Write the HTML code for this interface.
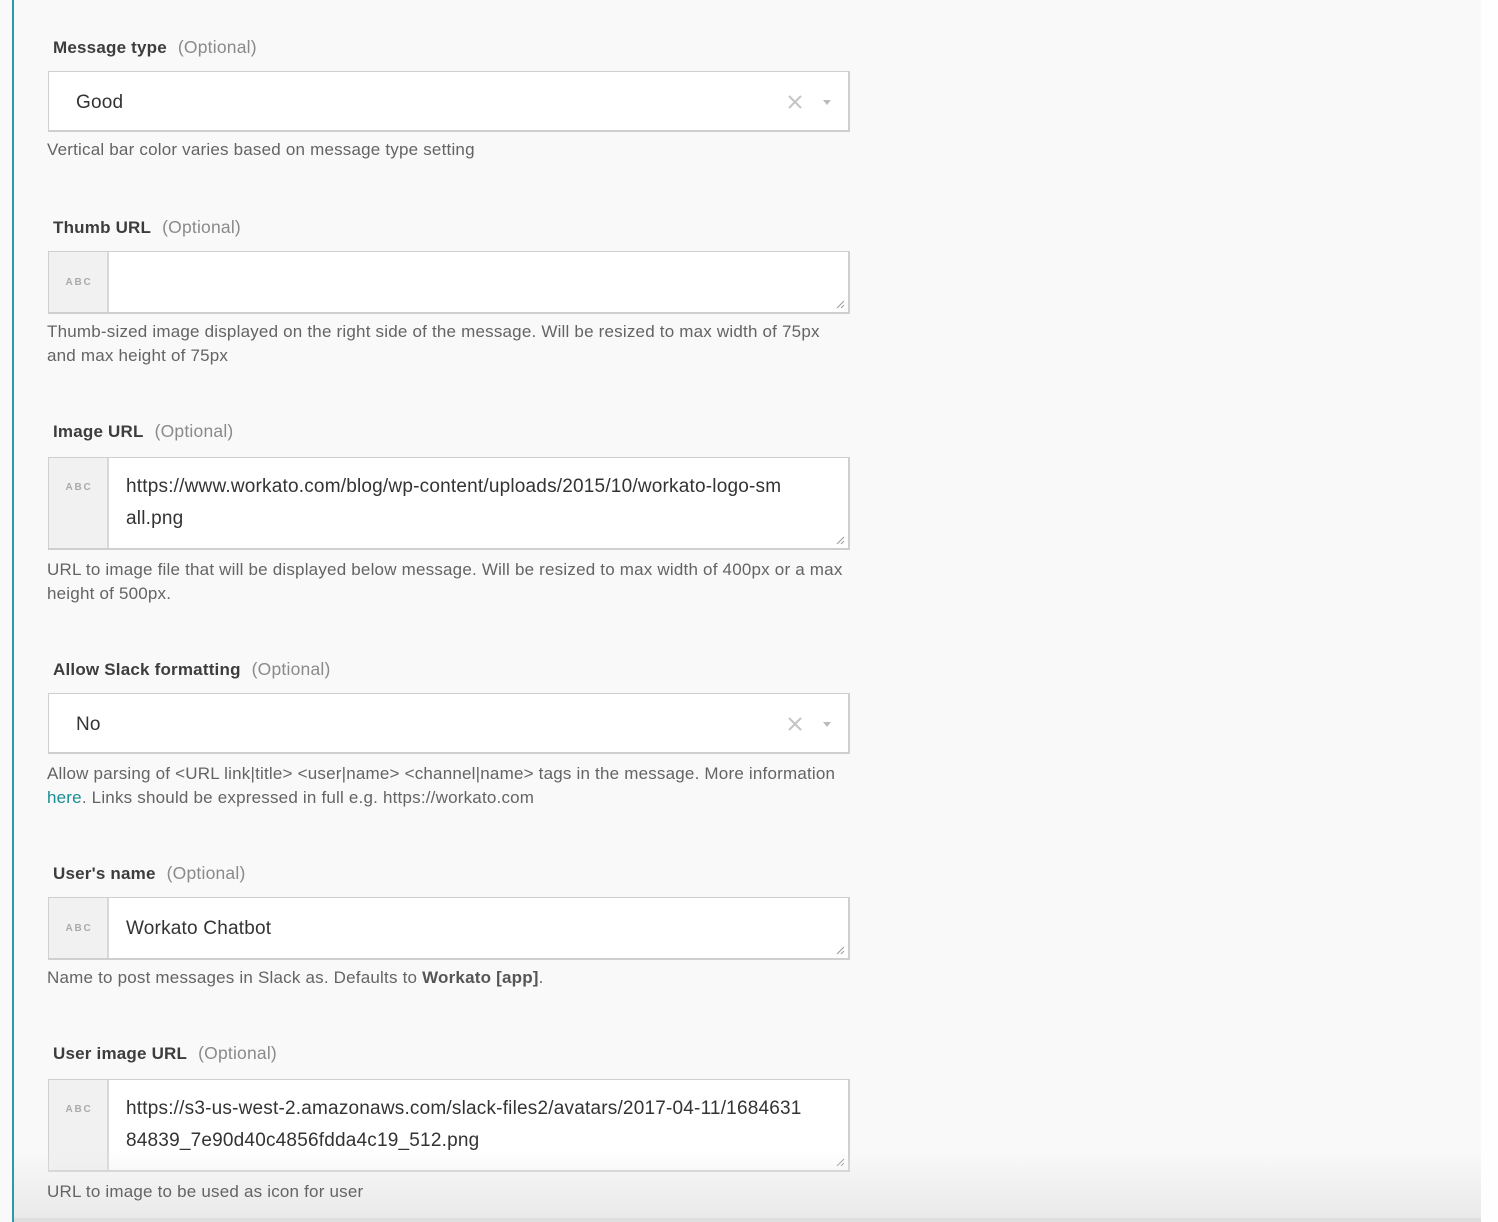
<!DOCTYPE html>
<html><head><meta charset="utf-8"><style>
html,body{margin:0;padding:0}
body{width:1498px;height:1222px;position:relative;overflow:hidden;background:#f9f9f9;font-family:"Liberation Sans",sans-serif;}
.rs{position:absolute;left:1481px;top:0;width:17px;height:1222px;background:#fefefe}
.lb{position:absolute;left:12px;top:0;width:2px;height:1222px;background:#2a9aa6}
.fade{position:absolute;left:14px;top:1150px;width:1467px;height:68px;background:linear-gradient(#f9f9f900,#e9e9e9)}
.bl{position:absolute;left:14px;top:1218px;width:1467px;height:4px;background:#dedede}
.lab{position:absolute;left:53px;font-size:17px;font-weight:bold;color:#3d3d3d;letter-spacing:0.2px;line-height:20px;white-space:nowrap}
.lab span{font-weight:normal;color:#8a8a8a;margin-left:11px;letter-spacing:0.2px;font-size:17.5px}
.box{position:absolute;left:48px;width:802px;background:#fff;border:1px solid #cfcfcf;border-bottom-width:2px;border-right-width:2px;box-sizing:border-box}
.val{position:absolute;left:27px;font-size:19px;color:#333;line-height:32px;white-space:nowrap;letter-spacing:0.2px}
.abc{position:absolute;left:0;top:0;bottom:0;width:58px;background:#f1f1f1;border-right:2px solid #d8d8d8}
.abc i{position:absolute;left:0;width:60px;text-align:center;font-style:normal;font-size:10px;font-weight:bold;letter-spacing:1.8px;color:#aaa}
.tv{left:77px}
.help{position:absolute;left:47px;font-size:17px;color:#646464;line-height:24px;white-space:nowrap;letter-spacing:0.2px}
.help a{color:#1a8c96;text-decoration:none}
.x{position:absolute;right:46px;top:23px}
.tri{position:absolute;right:17px;top:28px;width:0;height:0;border-left:4px solid transparent;border-right:4px solid transparent;border-top:5px solid #bbb}
.rz{position:absolute;right:3px;bottom:3px}
</style></head><body>
<div class="rs"></div>
<div class="lb"></div>

<div class="lab" style="top:37px">Message type<span>(Optional)</span></div>
<div class="box" style="top:71px;height:61px">
<div class="val" style="top:15px">Good</div>
<svg class="x" width="14" height="14"><path d="M1 1L13 13M13 1L1 13" stroke="#c4c4c4" stroke-width="2"/></svg>
<div class="tri"></div>
</div>
<div class="help" style="top:138px">Vertical bar color varies based on message type setting</div>

<div class="lab" style="top:217px">Thumb URL<span>(Optional)</span></div>
<div class="box" style="top:251px;height:63px">
<div class="abc"><i style="top:25px">ABC</i></div>
<svg class="rz" width="10" height="10"><path d="M9 2L2 9M9 6L6 9" stroke="#999" stroke-width="1"/></svg>
</div>
<div class="help" style="top:320px">Thumb-sized image displayed on the right side of the message. Will be resized to max width of 75px<br>and max height of 75px</div>

<div class="lab" style="top:421px">Image URL<span>(Optional)</span></div>
<div class="box" style="top:457px;height:93px">
<div class="abc"><i style="top:24px">ABC</i></div>
<div class="val tv" style="top:13px">https://www.workato.com/blog/wp-content/uploads/2015/10/workato-logo-sm<br>all.png</div>
<svg class="rz" width="10" height="10"><path d="M9 2L2 9M9 6L6 9" stroke="#999" stroke-width="1"/></svg>
</div>
<div class="help" style="top:558px">URL to image file that will be displayed below message. Will be resized to max width of 400px or a max<br>height of 500px.</div>

<div class="lab" style="top:659px">Allow Slack formatting<span>(Optional)</span></div>
<div class="box" style="top:693px;height:61px">
<div class="val" style="top:15px">No</div>
<svg class="x" width="14" height="14"><path d="M1 1L13 13M13 1L1 13" stroke="#c4c4c4" stroke-width="2"/></svg>
<div class="tri"></div>
</div>
<div class="help" style="top:762px">Allow parsing of &lt;URL link|title&gt; &lt;user|name&gt; &lt;channel|name&gt; tags in the message. More information<br><a>here</a>. Links should be expressed in full e.g. https://workato.com</div>

<div class="lab" style="top:863px">User's name<span>(Optional)</span></div>
<div class="box" style="top:897px;height:63px">
<div class="abc"><i style="top:25px">ABC</i></div>
<div class="val tv" style="top:15px">Workato Chatbot</div>
<svg class="rz" width="10" height="10"><path d="M9 2L2 9M9 6L6 9" stroke="#999" stroke-width="1"/></svg>
</div>
<div class="help" style="top:966px">Name to post messages in Slack as. Defaults to <b style="color:#555">Workato [app]</b>.</div>

<div class="lab" style="top:1043px">User image URL<span>(Optional)</span></div>
<div class="box" style="top:1079px;height:93px">
<div class="abc"><i style="top:24px">ABC</i></div>
<div class="val tv" style="top:13px">https://s3-us-west-2.amazonaws.com/slack-files2/avatars/2017-04-11/1684631<br>84839_7e90d40c4856fdda4c19_512.png</div>
<svg class="rz" width="10" height="10"><path d="M9 2L2 9M9 6L6 9" stroke="#999" stroke-width="1"/></svg>
</div>
<div class="fade"></div>
<div class="help" style="top:1180px">URL to image to be used as icon for user</div>
<div class="bl"></div>
</body></html>
